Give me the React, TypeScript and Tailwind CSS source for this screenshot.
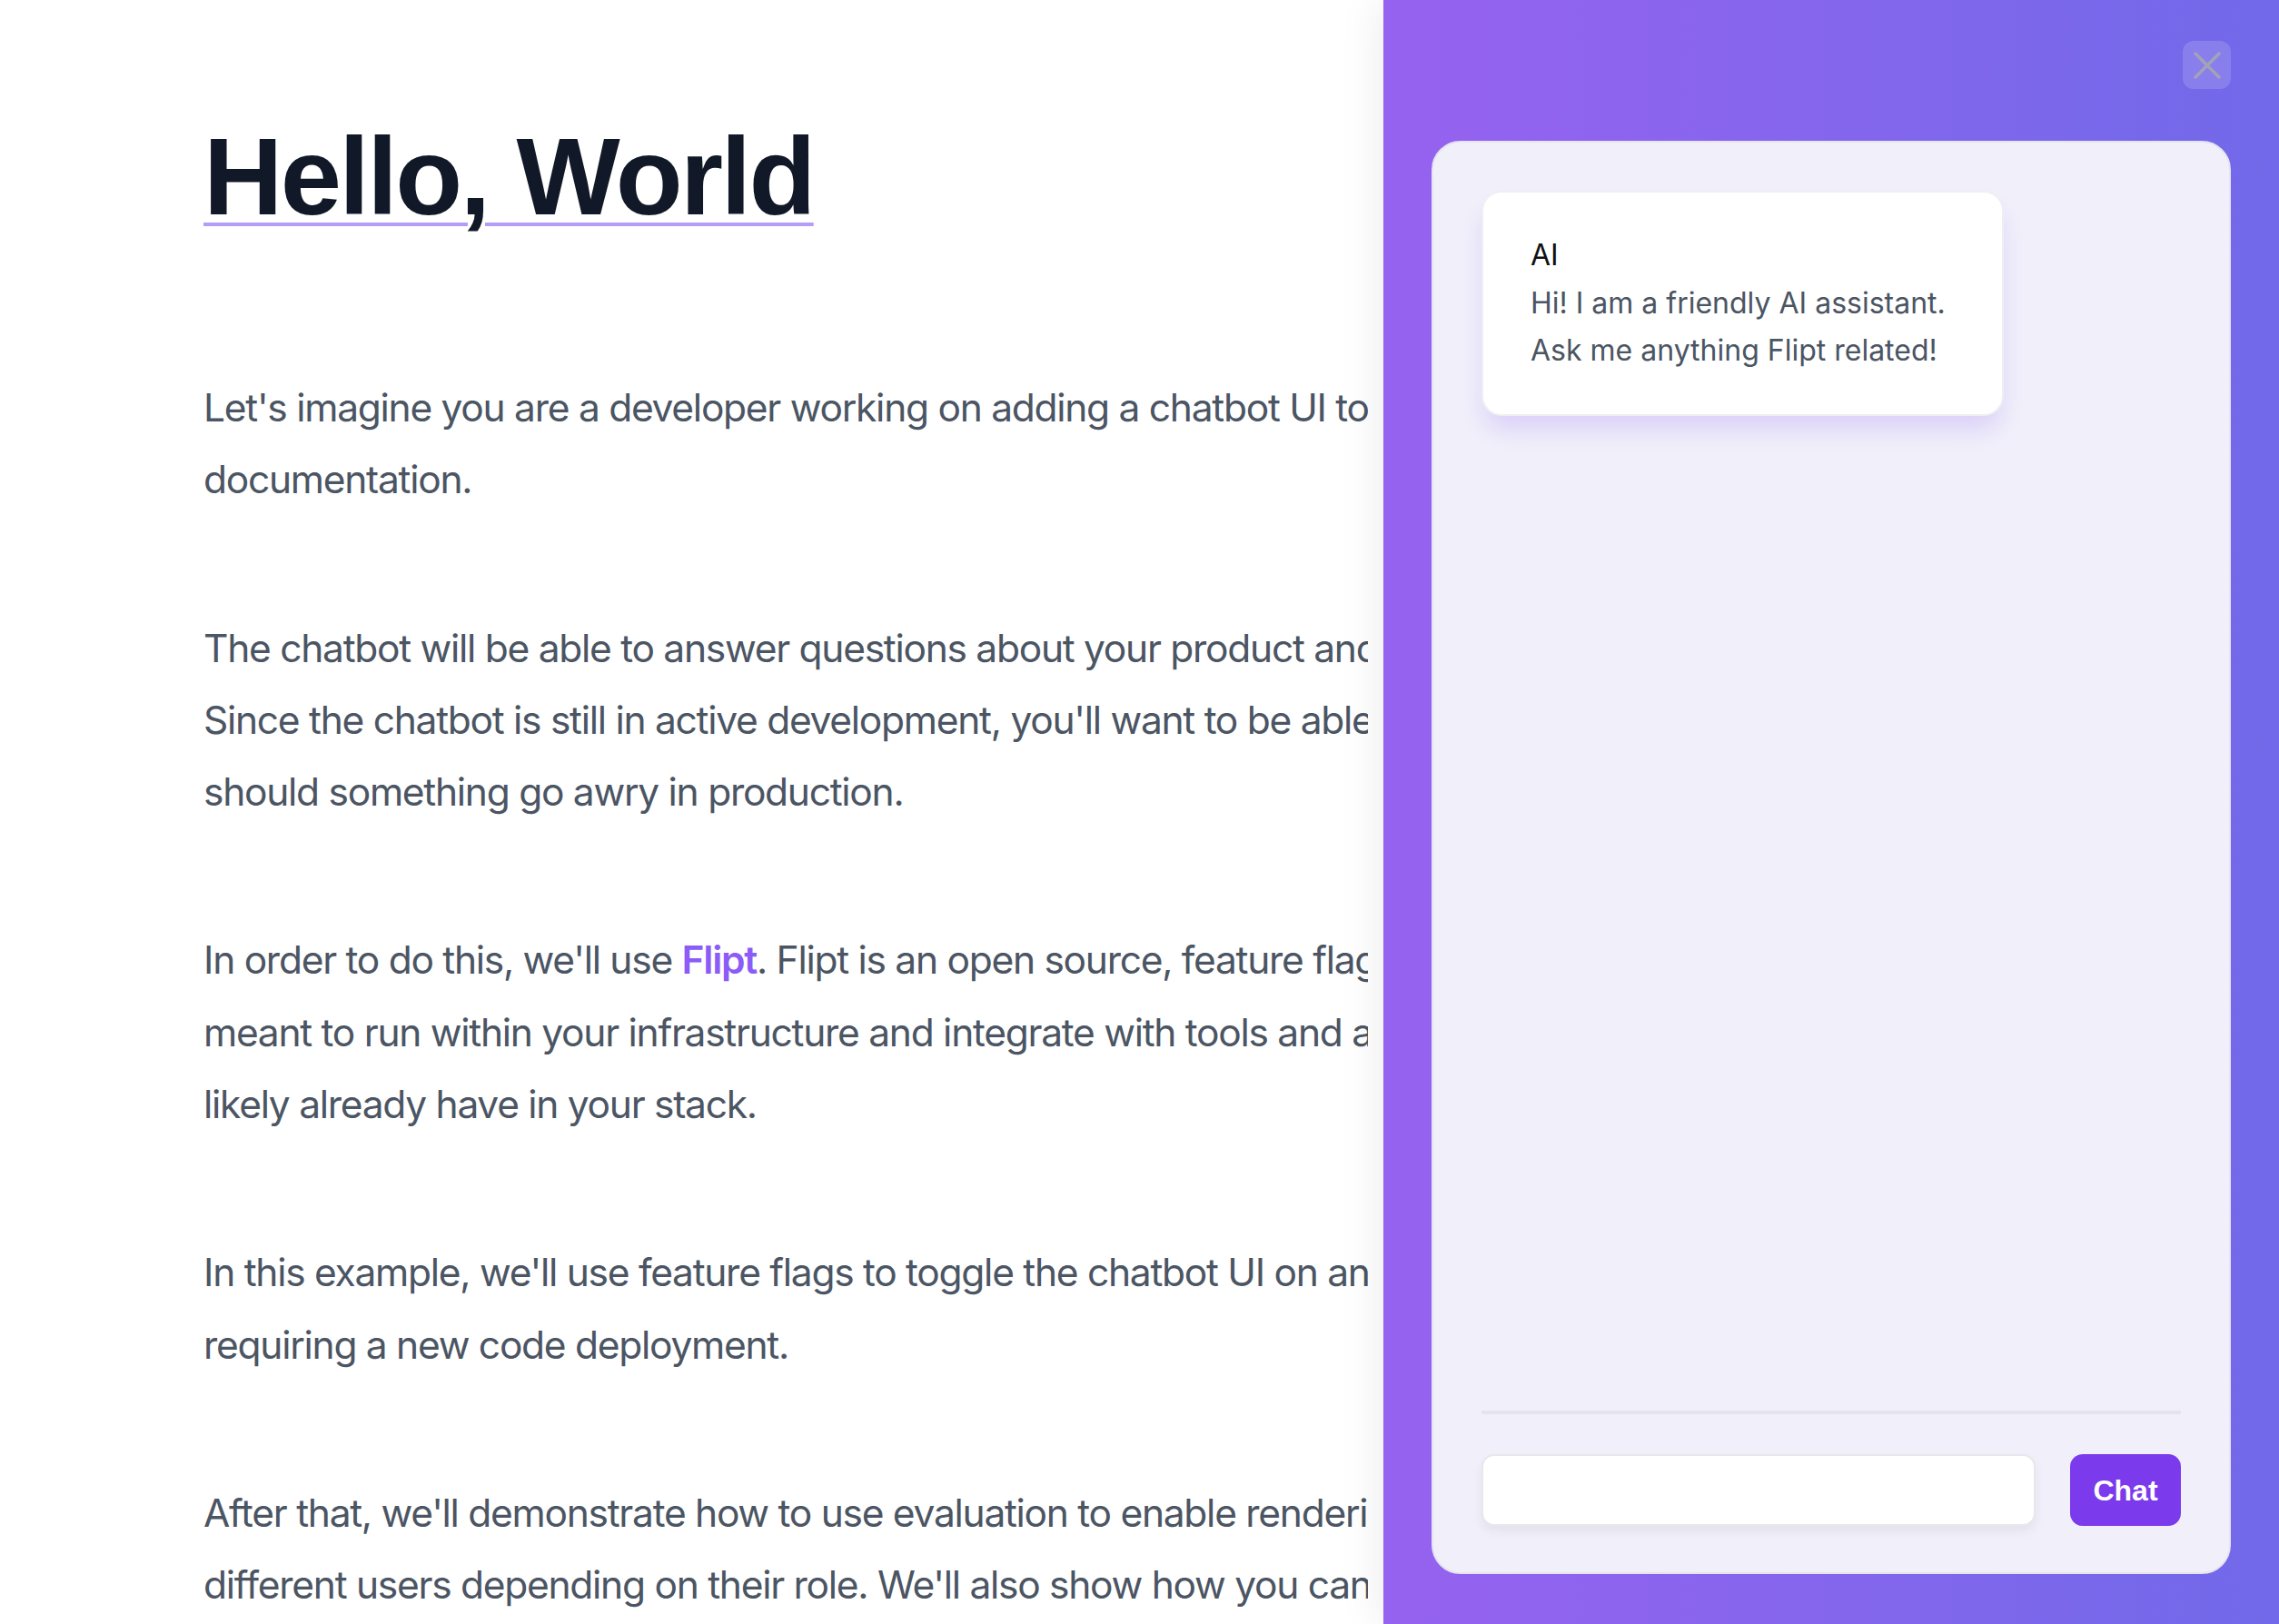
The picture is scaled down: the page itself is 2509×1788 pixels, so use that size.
import React from "react";

const Line = ({ children }: { children: React.ReactNode }) => (
  <span className="block whitespace-nowrap">{children}</span>
);

export default function App() {
  return (
    <div className="flex h-[1788px] w-[2509px] overflow-hidden bg-white">
      {/* Left article */}
      <div className="w-[1506px] shrink-0 overflow-hidden pl-[224px] pt-[134px] font-['Inter',sans-serif] text-[#4b5563]">
        <h1 className="font-['Liberation_Sans',Arial,sans-serif] text-[121px] font-bold leading-none tracking-[-0.022em] text-[#111827] underline decoration-[#b49cf9] decoration-[4px] underline-offset-[9px]">
          Hello, World
        </h1>
        <div className="mt-[154px] flex flex-col gap-[106px] text-[42.5px] leading-[79.3px] tracking-[-0.03em]">
          <p>
            <Line>Let's imagine you are a developer working on adding a chatbot UI to your product's</Line>
            <Line>documentation.</Line>
          </p>
          <p>
            <Line>The chatbot will be able to answer questions about your product and its features.</Line>
            <Line>Since the chatbot is still in active development, you'll want to be able to turn it off</Line>
            <Line>should something go awry in production.</Line>
          </p>
          <p>
            <Line>
              In order to do this, we'll use <span className="font-semibold text-[#8b5cf6]">Flipt</span>. Flipt is an open source, feature flag solution
            </Line>
            <Line>meant to run within your infrastructure and integrate with tools and applications you</Line>
            <Line>likely already have in your stack.</Line>
          </p>
          <p>
            <Line>In this example, we'll use feature flags to toggle the chatbot UI on and off without</Line>
            <Line>requiring a new code deployment.</Line>
          </p>
          <p>
            <Line>After that, we'll demonstrate how to use evaluation to enable rendering the chatbot for</Line>
            <Line>different users depending on their role. We'll also show how you can roll it out gradually.</Line>
          </p>
        </div>
      </div>

      {/* Right panel */}
      <div className="relative ml-[17px] flex flex-1 flex-col bg-linear-to-r from-[#9662f0] to-[#7169e9] pb-[55px] pl-[53px] pr-[53px] pt-[155px] shadow-[0_0_48px_rgba(0,0,0,0.09)]">
        <button className="absolute right-[53px] top-[45px] flex h-[53px] w-[53px] items-center justify-center rounded-[12px] bg-white/15">
          <svg width="30" height="30" viewBox="0 0 30 30" fill="none">
            <path d="M2 2 L28 28 M28 2 L2 28" stroke="#a3a2b6" strokeWidth="3.5" strokeLinecap="round" />
          </svg>
        </button>

        <div className="flex flex-1 flex-col rounded-[32px] border-2 border-[#e6e4ef] bg-[#f1f0fa] px-[53px] pb-[51px] pt-[53px] font-['Inter',sans-serif]">
          <div className="flex-1">
            <div className="w-[575px] rounded-[22px] border-2 border-[#efeff3] bg-white px-[52px] pb-[43px] pt-[43px] text-[32px] leading-[52.5px] shadow-[0_18px_28px_-4px_rgba(139,92,246,0.22)]">
              <div className="text-[#111111]">AI</div>
              <div className="text-[#4b5563]">
                <span className="block whitespace-nowrap">Hi! I am a friendly AI assistant.</span>
                <span className="block whitespace-nowrap">Ask me anything Flipt related!</span>
              </div>
            </div>
          </div>
          <div className="h-[4px] w-full bg-[#e3e4ec]" />
          <div className="mt-[44px] flex items-stretch justify-between">
            <div className="h-[79px] w-[610px] rounded-[14px] border-2 border-[#e7e7ec] bg-white shadow-[0_6px_12px_rgba(0,0,0,0.06)]" />
            <button className="flex h-[79px] w-[122px] items-center justify-center rounded-[14px] bg-[#7c3aed] font-['Liberation_Sans',Arial,sans-serif] text-[32px] font-bold text-white">
              Chat
            </button>
          </div>
        </div>
      </div>
    </div>
  );
}
